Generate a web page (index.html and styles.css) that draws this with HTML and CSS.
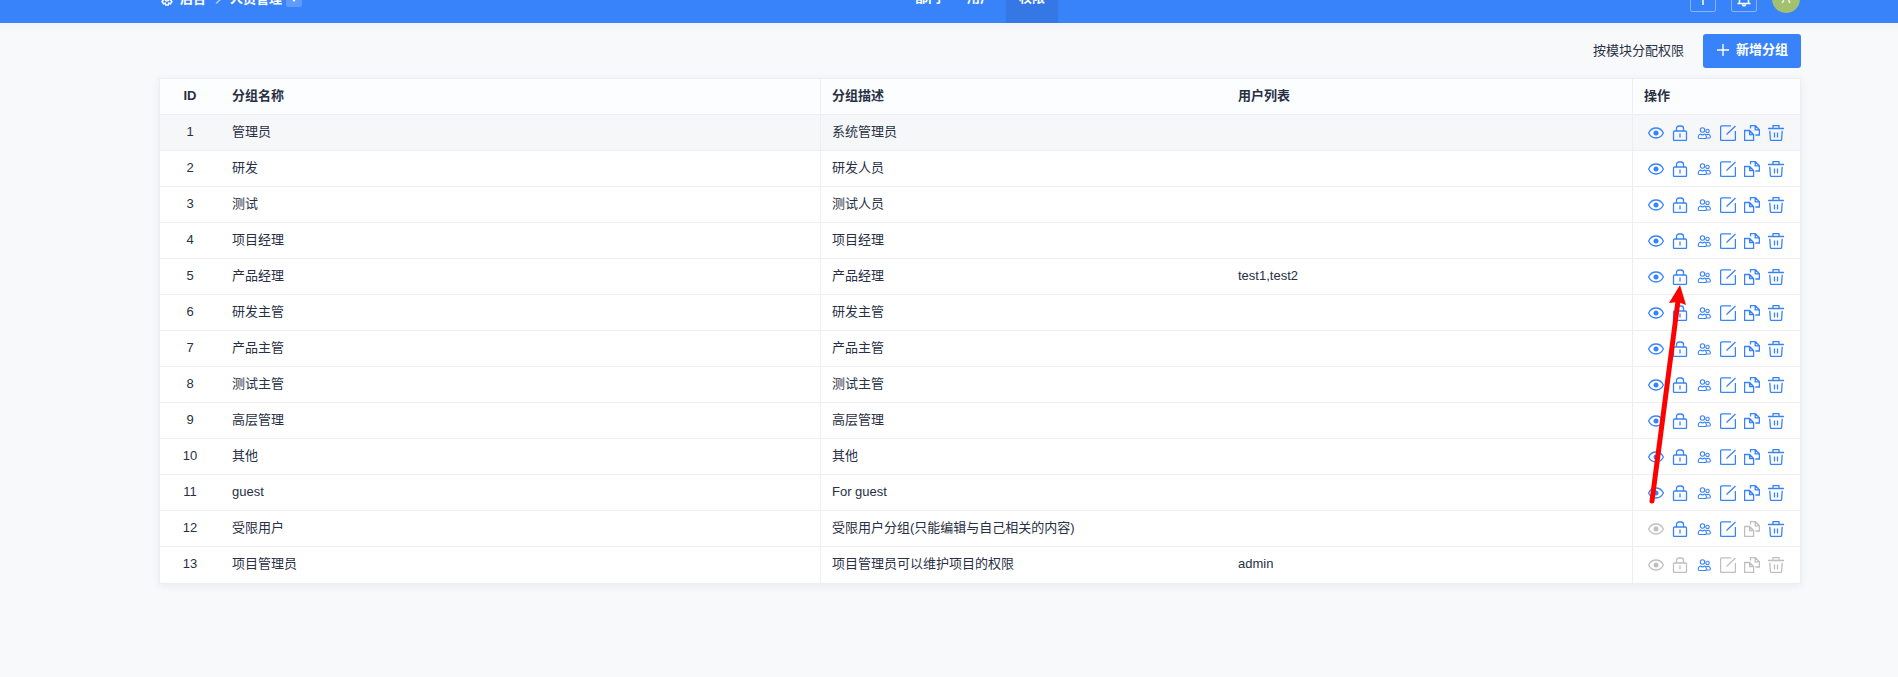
FILE: index.html
```html
<!DOCTYPE html>
<html lang="zh-CN">
<head>
    <meta charset="utf-8">
    <title>权限分组</title>
    <link rel="stylesheet" href="styles.css">
</head>
<body>
    <svg class="sprite" aria-hidden="true">
        <symbol id="icon-view" viewBox="0 0 16 16">
            <path d="M.6 8C2.300 4.600 4.900 3 8 3S13.700 4.600 15.400 8C13.700 11.400 11.100 13 8 13S2.300 11.400.6 8Z"/>
            <circle class="solid" cx="8" cy="8" r="2.500"/>
        </symbol>
        <symbol id="icon-lock" viewBox="0 0 16 16">
            <rect x="1.500" y="6" width="13" height="9.500" rx="1"/>
            <path d="M4.500 6V3.500a2.500 2.500 0 0 1 2.500-2.500h2a2.500 2.500 0 0 1 2.500 2.500V6M8 8.500v4"/>
        </symbol>
        <symbol id="icon-group" viewBox="0 0 16 16">
            <circle cx="6.500" cy="5" r="2.200"/>
            <circle cx="11.500" cy="6" r="1.700"/>
            <path d="M3.300 13.500C1.500 13.500 2 9.500 4.500 9c1.200 1 2.800 1 4 0 2.200.8 2.500 4.500.8 4.500ZM10.300 9.300c.8.4 1.800.4 2.500 0 1.700.7 2.200 3.700.5 3.700h-2.500"/>
        </symbol>
        <symbol id="icon-edit" viewBox="0 0 16 16">
            <path d="M11 .8H1.600a1 1 0 0 0-1 1v12.600a1 1 0 0 0 1 1h12.800a1 1 0 0 0 1-1V6M6.500 9.500 15.500 1"/>
        </symbol>
        <symbol id="icon-copy" viewBox="0 0 16 16">
            <path d="M.6 5.500h5l4 4v5.900h-9ZM5.600 5.500v4h4M6.500 3.500V.7h4.900l4 4V10h-4M11.200.7v4.200h4.200"/>
        </symbol>
        <symbol id="icon-trash" viewBox="0 0 16 16">
            <path d="M0 3.500h16M5 3.500V.7h6v2.800M1.800 5.800l.6 8.600a1 1 0 0 0 1 1h9.200a1 1 0 0 0 1-1l.6-8.600M6.500 7.500v5M9.500 7.500v5"/>
        </symbol>
    </svg>

    <header class="header">
        <div class="header-inner">
            <div class="breadcrumb">
                <a href="#">
                    <svg class="gear" viewBox="0 0 14 14"><circle cx="7" cy="7" r="2"/><path d="M5.800 1h2.400l.5 1.700 1.700-.5 1.500 2-1 1.500L12.500 7l-1.600 1.300 1 1.500-1.500 2-1.700-.5-.5 1.700H5.800l-.5-1.700-1.700.5-1.500-2 1-1.500L1.500 7l1.600-1.300-1-1.500 1.500-2 1.700.5Z"/></svg>
                    后台
                </a>
                <svg class="chevron" viewBox="0 0 8 12"><path d="M1 1.500 6 6l-5 4.500"/></svg>
                <a href="#">人员管理</a>
                <button class="caret" aria-label="切换"><svg viewBox="0 0 8 8"><path class="solid" d="M1 3h6L4 7Z"/></svg></button>
            </div>
            <nav class="tabs">
                <a href="#">部门</a>
                <a href="#">用户</a>
                <a href="#" class="active">权限</a>
            </nav>
            <div class="toolbar">
                <button class="tool" aria-label="新建"><svg viewBox="0 0 16 16"><path d="M8 2v12M2 8h12"/></svg></button>
                <button class="tool" aria-label="消息"><svg viewBox="0 0 16 16"><path d="M1.500 12.500h13M3.500 12V6.500a4.500 4.500 0 0 1 9 0V12M6.500 13.500c.3 1.700 2.700 1.700 3 0"/></svg></button>
                <button class="avatar">A</button>
            </div>
        </div>
    </header>

    <main class="main">
        <div class="actions-bar">
            <a href="#">按模块分配权限</a>
            <button class="btn-primary"><svg viewBox="0 0 12 12"><path d="M6 0v12M0 6h12"/></svg>新增分组</button>
        </div>
        <div class="panel">
            <table>
                <thead>
                    <tr>
                        <th class="col-id">ID</th>
                        <th class="col-name">分组名称</th>
                        <th class="col-desc">分组描述</th>
                        <th class="col-users">用户列表</th>
                        <th class="col-ops">操作</th>
                    </tr>
                </thead>
                <tbody id="groups"></tbody>
            </table>
            <svg class="arrow" viewBox="0 0 46 222" aria-hidden="true">
                <path class="shaft" d="M6 216 32 16"/>
                <path class="head" d="M34 0 40 20 32 17 23 18Z"/>
            </svg>
        </div>
    </main>

    <script>
        const actions = [
            ["view", "视图维护"],
            ["lock", "权限维护"],
            ["group", "成员维护"],
            ["edit", "编辑分组"],
            ["copy", "复制分组"],
            ["trash", "删除分组"]
        ];

        // name, description, users, disabled actions
        const groups = [
            ["管理员", "系统管理员", "", []],
            ["研发", "研发人员", "", []],
            ["测试", "测试人员", "", []],
            ["项目经理", "项目经理", "", []],
            ["产品经理", "产品经理", "test1,test2", []],
            ["研发主管", "研发主管", "", []],
            ["产品主管", "产品主管", "", []],
            ["测试主管", "测试主管", "", []],
            ["高层管理", "高层管理", "", []],
            ["其他", "其他", "", []],
            ["guest", "For guest", "", []],
            ["受限用户", "受限用户分组(只能编辑与自己相关的内容)", "", ["view", "copy"]],
            ["项目管理员", "项目管理员可以维护项目的权限", "admin", ["view", "lock", "edit", "copy", "trash"]]
        ];

        document.getElementById("groups").innerHTML = groups.map(([name, desc, users, disabled], i) => {
            const buttons = actions.map(([icon, label]) =>
                `<button class="op op-${icon}" aria-label="${label}"${disabled.includes(icon) ? " disabled" : ""}><svg><use href="#icon-${icon}"/></svg></button>`
            ).join("");
            return `<tr${i === 0 ? ' class="hover"' : ""}>
                <td class="col-id">${i + 1}</td>
                <td class="col-name">${name}</td>
                <td class="col-desc">${desc}</td>
                <td class="col-users">${users}</td>
                <td class="col-ops"><div class="ops">${buttons}</div></td>
            </tr>`;
        }).join("");
    </script>
</body>
</html>
```

FILE: styles.css
```css
* { box-sizing: border-box; }
body { margin: 0; background: #f8f9fb; color: #283044; font: 13px/20px "Liberation Sans", "Noto Sans CJK SC", sans-serif; }
a { color: inherit; text-decoration: none; }
button { padding: 0; border: none; background: none; color: inherit; font: inherit; cursor: pointer; }
svg { display: block; fill: none; stroke: currentColor; }
.sprite { display: none; }
.solid { fill: currentColor; stroke: none; }

/* the header is scrolled partly out of view */
.header { display: flex; align-items: flex-end; height: 23px; padding: 0 98px 0 160px; overflow: hidden; background: #3883fa; color: #fff; }
.header-inner { display: grid; grid-template-columns: 1fr auto 1fr; align-items: center; width: 100%; height: 48px; }
.breadcrumb { display: flex; align-items: center; font-weight: bold; }
.breadcrumb a { display: flex; align-items: center; gap: 6px; }
.gear { width: 14px; height: 14px; stroke-width: 1.5; }
.chevron { width: 8px; height: 12px; margin: 0 7px 0 9px; stroke-width: 1.5; opacity: 0.6; }
.caret { display: flex; align-items: center; justify-content: center; width: 16px; height: 16px; margin-left: 4px; border-radius: 2px; background: rgba(255, 255, 255, 0.2); }
.caret svg { width: 8px; height: 8px; }
.tabs { display: flex; height: 48px; font-weight: bold; }
.tabs a { padding: 0 13px; line-height: 46px; }
.tabs .active { background: #3578e5; }
.toolbar { display: flex; align-items: center; justify-content: flex-end; gap: 15px; }
.tool { display: flex; align-items: center; justify-content: center; width: 26px; height: 26px; border: 1px solid rgba(255, 255, 255, 0.4); border-radius: 2px; }
.tool svg { width: 16px; height: 16px; stroke-width: 1.5; }
.avatar { width: 28px; height: 28px; border-radius: 50%; background: #a3c070; }

.main { padding: 11px 97px 40px 159px; background: linear-gradient(#f2f4f6, #f8f9fb 10px); }
.actions-bar { display: flex; align-items: center; justify-content: flex-end; gap: 19px; margin-bottom: 10px; }
.btn-primary { display: flex; align-items: center; gap: 7px; height: 34px; padding: 0 13px 2px 14px; border-radius: 3px; background: #3883fa; color: #fff; font-weight: bold; }
.btn-primary svg { width: 12px; height: 12px; stroke-width: 1.4; }

.panel { position: relative; border: 1px solid #edeef2; border-radius: 2px; background: #fff; box-shadow: 0 2px 8px rgba(49, 60, 82, 0.08); }
table { width: 100%; border-collapse: separate; border-spacing: 0; table-layout: fixed; }
th, td { height: 36px; padding: 0 12px 2px; border-bottom: 1px solid #edeef2; text-align: left; line-height: 20px; }
th { background: #fcfdfe; }
tbody tr:last-child td { border-bottom: none; }
.hover td { background: #f6f7f9; }
.col-id { width: 60px; text-align: center; }
.col-name { width: 601px; border-right: 1px solid #edeef2; }
.col-desc, .col-users { padding-left: 11px; }
.col-users { border-right: 1px solid #edeef2; }
.col-ops { width: 167px; padding: 0 11px 2px; }
.ops { display: flex; padding-top: 2px; }
.op { display: flex; align-items: center; justify-content: center; width: 24px; height: 20px; color: #3883fa; }
.op svg { width: 16px; height: 16px; stroke-width: 1.3; }
.op-group svg { stroke-width: 1.1; }
.op:disabled { color: #bfbfbf; cursor: default; }

.arrow { position: absolute; right: 108px; top: 206px; width: 46px; height: 222px; pointer-events: none; }
.shaft { stroke: #f00; stroke-width: 5; stroke-linecap: round; }
.head { fill: #f00; stroke: none; }
```
